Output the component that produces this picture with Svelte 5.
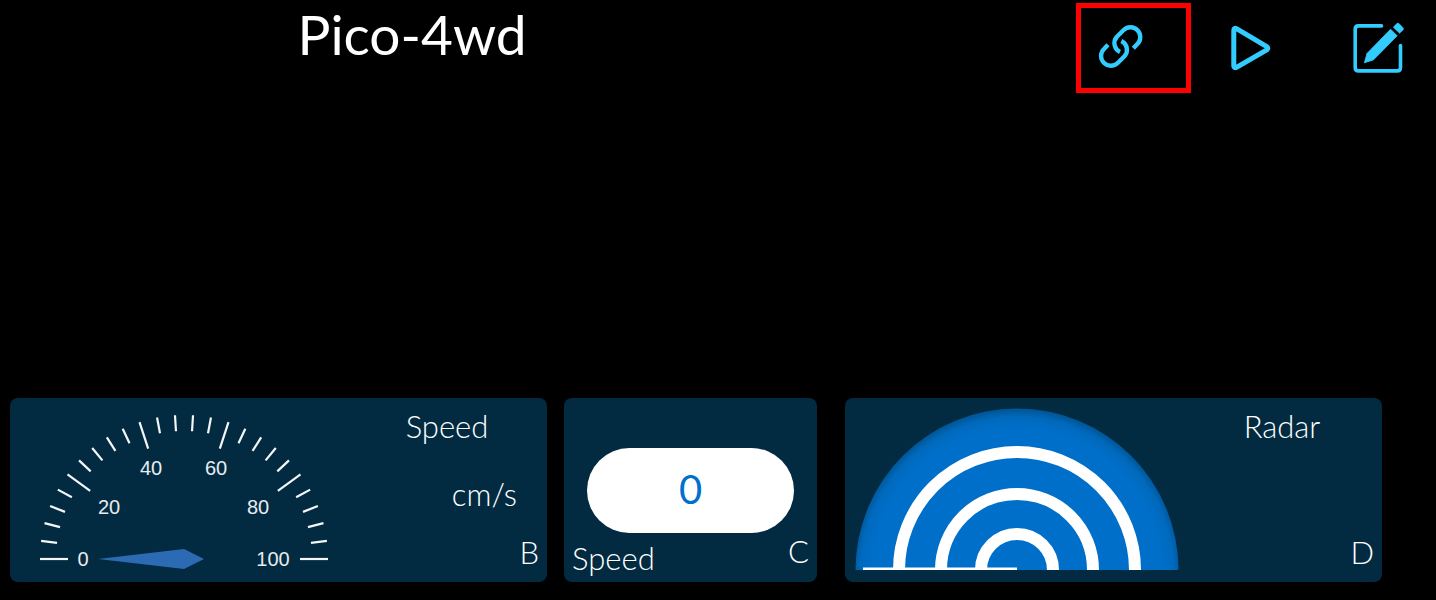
<script>
  const cx = 154;
  const cy = 150;
  const ticks = Array.from({ length: 26 }, (_, i) => {
    const a = (i * Math.PI) / 25;
    const major = i % 5 === 0;
    const inner = major ? 116 : 128;
    return {
      major,
      x1: cx - 144 * Math.cos(a),
      y1: cy - 144 * Math.sin(a),
      x2: cx - inner * Math.cos(a),
      y2: cy - inner * Math.sin(a)
    };
  });
  const labels = [
    { value: 0, x: 53, y: 157 },
    { value: 20, x: 79, y: 105 },
    { value: 40, x: 121, y: 66 },
    { value: 60, x: 186, y: 66 },
    { value: 80, x: 228, y: 105 },
    { value: 100, x: 243, y: 157 }
  ];
  const rings = [118, 76, 36];
  let speed = $state(0);
</script>

<div class="page">
  <header>
    <h1>Pico-4wd</h1>
    <nav aria-label="Controller">
      <button class="connect" aria-label="Connect">
        <svg width="130" height="100" viewBox="0 0 390 300" fill="none" stroke="#3cf" stroke-width="13">
          <path d="M190 145 L202 132 A29 29 0 0 0 161 90 L140 111 A29 29 0 0 0 150 156" />
          <path d="M114 134 L102 147 A29 29 0 0 0 143 189 L164 168 A29 29 0 0 0 154 123" />
        </svg>
      </button>
      <button class="play" aria-label="Run">
        <svg width="40" height="46" viewBox="0 0 40 46">
          <path d="M2.8 5.2 C2.8 3.3 4.1 2.8 5.5 3.6 L35.8 21.7 C37.2 22.6 37.2 24 35.8 24.9 L5.5 42.4 C4.1 43.2 2.8 42.6 2.8 40.9 Z" fill="none" stroke="#3cf" stroke-width="5" stroke-linejoin="round" />
        </svg>
      </button>
      <button class="edit" aria-label="Edit">
        <svg width="52" height="52" viewBox="0 0 52 52">
          <path d="M28.5 3.9 H5.5 Q2.2 3.9 2.2 7.4 V45.4 Q2.2 48.9 5.5 48.9 H44 Q47.5 48.9 47.5 45.4 V23.5" fill="none" stroke="#3cf" stroke-width="3.6" stroke-linecap="round" />
          <path d="M11.4 40.8 L14 31.4 L37.6 7.2 L44.2 13.8 L20.4 37.9 Z" fill="#3cf" stroke="#3cf" stroke-width=".8" stroke-linejoin="round" />
          <path d="M40.3 5.2 L43.8 1.6 Q44.9 .6 46 1.6 L50 5.7 Q51 6.9 50 8 L46.6 11.3 Z" fill="#3cf" stroke="#3cf" stroke-width=".6" />
        </svg>
      </button>
    </nav>
  </header>

  <main>
    <section class="card wide">
      <svg class="gauge" width="308" height="184" viewBox="0 -11 308 184" role="img" aria-label="Speed gauge">
        {#each ticks as t}
          <line x1={t.x1} y1={t.y1} x2={t.x2} y2={t.y2} stroke="#f4f6f7" stroke-width="2.2" />
        {/each}
        {#each labels as l}
          <text x={l.x} y={l.y} text-anchor="middle">{l.value}</text>
        {/each}
        <path d="M68 150 L154 140 L174 150 L154 160 Z" fill="#2c6ab4" />
      </svg>
      <div class="info">
        <h2>Speed</h2>
        <span class="unit">cm/s</span>
        <span class="key">B</span>
      </div>
    </section>

    <section class="card number">
      <output>{speed}</output>
      <div class="foot">
        <h2>Speed</h2>
        <span>C</span>
      </div>
    </section>

    <section class="card wide">
      <svg class="radar" width="324" height="162" viewBox="0 0 324 162" role="img" aria-label="Radar">
        <defs>
          <radialGradient id="disc" gradientUnits="userSpaceOnUse" cx="162" cy="166" r="167">
            <stop offset=".87" stop-color="#006fc9" />
            <stop offset=".94" stop-color="#0069bc" />
            <stop offset="1" stop-color="#00508c" />
          </radialGradient>
        </defs>
        <circle cx="162" cy="162" r="161.5" fill="url(#disc)" />
        {#each rings as r}
          <circle cx="162" cy="162" {r} fill="none" stroke="#fff" stroke-width="12" />
        {/each}
        <rect x="8" y="159.5" width="154" height="2.5" fill="#fff" />
      </svg>
      <div class="info">
        <h2>Radar</h2>
        <span class="key">D</span>
      </div>
    </section>
  </main>
</div>

<style>
  :global(body) {
    margin: 0;
    background: #000;
  }
  .page {
    box-sizing: border-box;
    min-height: 100vh;
    padding-bottom: 18px;
    display: flex;
    flex-direction: column;
    justify-content: space-between;
    background: #000;
    color: #fff;
    font-family: Lato, "Open Sans", sans-serif;
    font-weight: 300;
    font-size: 31px;
    line-height: 36px;
  }
  header {
    display: grid;
    grid-template-columns: 824fr 612fr;
    align-items: start;
  }
  h1,
  h2 {
    margin: 0;
    font: inherit;
  }
  h1 {
    text-align: center;
    font-size: 55px;
    font-weight: 400;
    line-height: 68px;
  }
  nav {
    display: flex;
    justify-content: flex-end;
    align-items: center;
    padding: 3px 31px 0 0;
  }
  button {
    margin: 0;
    padding: 0;
    border: 0;
    background: none;
    cursor: pointer;
  }
  svg {
    display: block;
    flex: none;
  }
  .connect {
    box-sizing: border-box;
    width: 115px;
    height: 90px;
    border: 5px solid #f00;
    overflow: hidden;
  }
  .connect svg {
    margin: -8px 0 0 -11px;
  }
  .play {
    margin: 0 82px 0 40px;
  }
  main {
    display: grid;
    grid-template-columns: 537fr 264fr 537fr;
    gap: 17px;
    padding: 0 54px 0 10px;
  }
  .card {
    display: flex;
    min-height: 184px;
    border-radius: 8px;
    background: #022b42;
  }
  .wide {
    justify-content: space-between;
  }
  .gauge {
    margin-left: 20px;
  }
  .gauge text {
    font-family: "Liberation Sans", Arial, sans-serif;
    font-size: 20px;
    fill: #e8ecef;
    font-weight: 400;
  }
  .radar {
    margin: 10px 0 0 10px;
  }
  .info {
    box-sizing: border-box;
    width: 200px;
    padding: 10px 8px 12px 0;
    display: flex;
    flex-direction: column;
    justify-content: space-between;
    text-align: right;
  }
  .info h2 {
    text-align: center;
    padding-left: 8px;
  }
  .unit {
    padding: 10px 22px 0 0;
  }
  .number {
    flex-direction: column;
    justify-content: space-between;
    margin-right: 11px;
  }
  output {
    margin: 50px 23px 0;
    border-radius: 43px;
    background: #fff;
    color: #0070cc;
    text-align: center;
    font-size: 40px;
    font-weight: 400;
    line-height: 83px;
    padding-bottom: 2px;
  }
  .foot {
    display: flex;
    justify-content: space-between;
    align-items: flex-start;
    padding: 0 8px 6px;
  }
  .foot h2 {
    padding-top: 7px;
  }
</style>
